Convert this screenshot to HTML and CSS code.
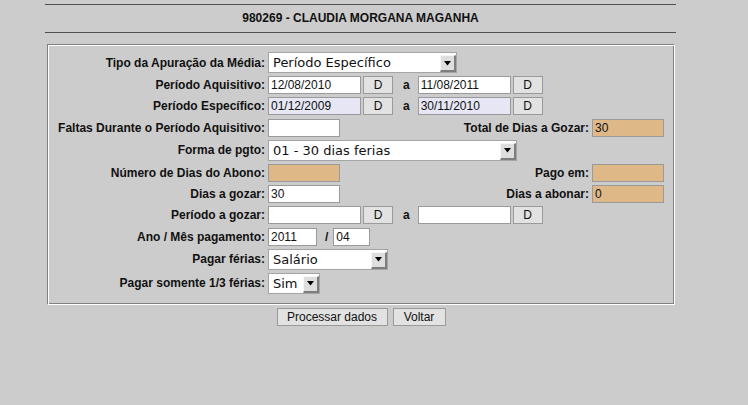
FILE: index.html
```html
<!DOCTYPE html>
<html lang="pt">
<head>
<meta charset="utf-8">
<title>Férias</title>
<link rel="stylesheet" href="styles.css">
</head>
<body>
<div class="page">
  <div class="header">
    <h1 class="title">980269 - CLAUDIA MORGANA MAGANHA</h1>
  </div>

  <div class="panel">
    <div class="row">
      <label class="lbl">Tipo da Apuração da Média:</label>
      <div class="select sel-tipo"><span class="sel-text">Período Específico</span><span class="sel-btn"><svg width="7" height="5" viewBox="0 0 7 5"><polygon points="0,0 7,0 3.5,4.5" fill="#000"/></svg></span></div>
    </div>

    <div class="row">
      <label class="lbl">Período Aquisitivo:</label>
      <input class="inp w-date" type="text" value="12/08/2010">
      <button class="dbtn">D</button>
      <span class="sep">a</span>
      <input class="inp w-date" type="text" value="11/08/2011">
      <button class="dbtn">D</button>
    </div>

    <div class="row">
      <label class="lbl">Período Específico:</label>
      <input class="inp w-date lav" type="text" value="01/12/2009">
      <button class="dbtn">D</button>
      <span class="sep">a</span>
      <input class="inp w-date lav" type="text" value="30/11/2010">
      <button class="dbtn">D</button>
    </div>

    <div class="row">
      <label class="lbl">Faltas Durante o Período Aquisitivo:</label>
      <input class="inp w-num" type="text" value="">
      <div class="right">
        <label class="lbl-r">Total de Dias a Gozar:</label>
        <input class="inp w-num tan" type="text" value="30">
      </div>
    </div>

    <div class="row">
      <label class="lbl">Forma de pgto:</label>
      <div class="select sel-forma"><span class="sel-text">01 - 30 dias ferias</span><span class="sel-btn"><svg width="7" height="5" viewBox="0 0 7 5"><polygon points="0,0 7,0 3.5,4.5" fill="#000"/></svg></span></div>
    </div>

    <div class="row">
      <label class="lbl">Número de Dias do Abono:</label>
      <input class="inp w-num tan" type="text" value="">
      <div class="right">
        <label class="lbl-r">Pago em:</label>
        <input class="inp w-num tan" type="text" value="">
      </div>
    </div>

    <div class="row">
      <label class="lbl">Dias a gozar:</label>
      <input class="inp w-num" type="text" value="30">
      <div class="right">
        <label class="lbl-r">Dias a abonar:</label>
        <input class="inp w-num tan" type="text" value="0">
      </div>
    </div>

    <div class="row">
      <label class="lbl">Período a gozar:</label>
      <input class="inp w-date" type="text" value="">
      <button class="dbtn">D</button>
      <span class="sep">a</span>
      <input class="inp w-date" type="text" value="">
      <button class="dbtn">D</button>
    </div>

    <div class="row">
      <label class="lbl">Ano / Mês pagamento:</label>
      <input class="inp w-year" type="text" value="2011">
      <span class="slash">/</span>
      <input class="inp w-month" type="text" value="04">
    </div>

    <div class="row">
      <label class="lbl">Pagar férias:</label>
      <div class="select sel-pagar"><span class="sel-text">Salário</span><span class="sel-btn"><svg width="7" height="5" viewBox="0 0 7 5"><polygon points="0,0 7,0 3.5,4.5" fill="#000"/></svg></span></div>
    </div>

    <div class="row">
      <label class="lbl">Pagar somente 1/3 férias:</label>
      <div class="select sel-terco"><span class="sel-text">Sim</span><span class="sel-btn"><svg width="7" height="5" viewBox="0 0 7 5"><polygon points="0,0 7,0 3.5,4.5" fill="#000"/></svg></span></div>
    </div>
  </div>

  <div class="actions">
    <button class="btn btn-proc">Processar dados</button>
    <button class="btn btn-volt">Voltar</button>
  </div>
</div>
</body>
</html>
```

FILE: styles.css
```css
html, body {
  margin: 0;
  padding: 0;
  background: #cccccc;
}

body {
  font-family: "Liberation Sans", Arial, sans-serif;
  font-size: 12px;
  color: #111;
}

.page {
  padding-top: 4px;
}

.header {
  margin-left: 45px;
  width: 631px;
  border-top: 1px solid #505050;
  border-bottom: 1px solid #505050;
  height: 27px;
}

.title {
  margin: 0;
  font-size: 12px;
  font-weight: bold;
  line-height: 27px;
  text-align: center;
  color: #111;
}

.panel {
  margin: 11px 0 0 47px;
  width: 628px;
  box-sizing: border-box;
  display: flex;
  flex-direction: column;
  gap: 3.2px;
  border-top: 1px solid #808080;
  border-left: 1px solid #808080;
  border-right: 1px solid #ffffff;
  border-bottom: 1px solid #ffffff;
  box-shadow: inset 1px 1px 0 #ffffff, inset -1px -1px 0 #808080;
  padding: 7px 10px 10px 1px;
}

.row {
  display: flex;
  align-items: center;
  line-height: 14px;
}

.lbl {
  flex: none;
  width: 216px;
  margin-right: 3px;
  text-align: right;
  font-weight: bold;
  white-space: nowrap;
}

.right {
  margin-left: auto;
  display: flex;
  align-items: center;
}

.lbl-r {
  font-weight: bold;
  margin-right: 3px;
  white-space: nowrap;
}

.inp {
  box-sizing: border-box;
  height: 18px;
  margin: 0;
  padding: 0 2px;
  border: 1px solid #9a9a9a;
  background: #ffffff;
  font-family: "Liberation Sans", Arial, sans-serif;
  font-size: 12px;
  color: #111;
  outline: none;
}

.w-date { width: 93px; }
.w-num { width: 72px; }
.w-year { width: 49px; }
.w-month { width: 37px; }

.lav { background: #e6e6f4; }
.tan { background: #deb887; }

.dbtn {
  box-sizing: border-box;
  width: 30px;
  height: 18px;
  margin: 0 0 0 2px;
  padding: 0;
  border: 1px solid #9a9a9a;
  background: #e2e2e2;
  font-family: "Liberation Sans", Arial, sans-serif;
  font-size: 12px;
  color: #111;
}

.sep {
  font-weight: bold;
  margin: 0 8px 0 10px;
}

.slash {
  font-weight: bold;
  margin: 0 5px 0 8px;
}

.select {
  box-sizing: border-box;
  display: flex;
  align-items: stretch;
  height: 21px;
  background: #ffffff;
  border: 1px solid #a4a4a4;
}

.sel-text {
  flex: 1;
  padding-left: 4px;
  font-family: "DejaVu Sans", Verdana, sans-serif;
  font-size: 13px;
  line-height: 19px;
  color: #111;
  white-space: nowrap;
  overflow: hidden;
}

.sel-btn {
  box-sizing: border-box;
  flex: none;
  width: 16px;
  margin: 2px 0 0 0;
  display: flex;
  align-items: center;
  justify-content: center;
  background: #dedede;
  border-top: 1px solid #f6f6f6;
  border-left: 1px solid #f6f6f6;
  border-right: 2px solid #7e7e7e;
  border-bottom: 2px solid #7e7e7e;
}

.sel-tipo { width: 189px; }
.sel-forma { width: 249px; }
.sel-pagar { width: 120px; }
.sel-terco { width: 52px; }

.actions {
  margin: 3px 0 0 47px;
  width: 628px;
  display: flex;
  justify-content: center;
  gap: 5px;
}

.btn {
  box-sizing: border-box;
  height: 18px;
  margin: 0;
  padding: 0;
  border: 1px solid #9a9a9a;
  background: #e2e2e2;
  font-family: "Liberation Sans", Arial, sans-serif;
  font-size: 12px;
  color: #111;
}

.btn-proc { width: 111px; }
.btn-volt { width: 53px; }
```
